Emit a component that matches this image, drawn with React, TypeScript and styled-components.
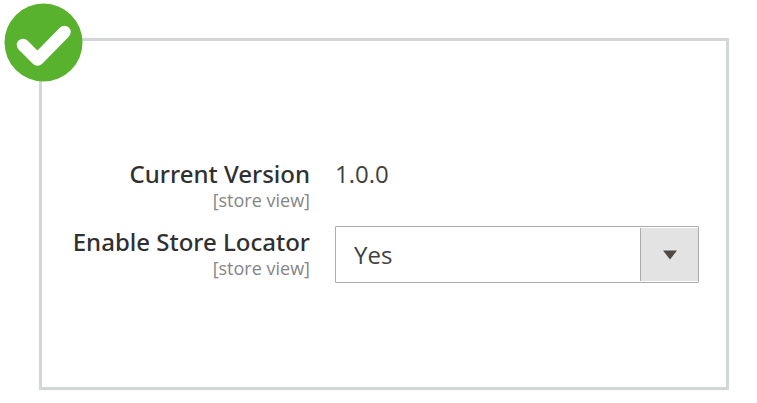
import React from "react";
import styled, { createGlobalStyle } from "styled-components";

const GlobalStyle = createGlobalStyle`
  *, *::before, *::after { box-sizing: border-box; }
  body {
    margin: 0;
    background: #fff;
    color: #41413f;
    font-family: "Open Sans", "Noto Sans", sans-serif;
  }
`;

const Page = styled.main`
  padding: 38px 28px 13px 39px;
`;

const Panel = styled.section`
  position: relative;
  padding: 117px 27px 104px 30px;
  border: 3px solid #d3d6d6;
  border-radius: 1px;
  box-shadow: 0 0 1px #d3d6d6;
`;

const StatusBadge = styled.svg`
  position: absolute;
  top: -38px;
  left: -38px;
  width: 79px;
  height: 79px;
`;

const Settings = styled.form`
  display: grid;
  grid-template-columns: 238px minmax(0, 1fr);
  column-gap: 25px;
  row-gap: 16px;
`;

const Caption = styled.div`
  display: flex;
  flex-direction: column;
  align-items: flex-end;
  white-space: nowrap;
`;

const Name = styled.label`
  color: #303030;
  font-family: "Noto Sans", sans-serif;
  font-size: 24px;
  font-weight: 500;
  line-height: 32px;
`;

const Scope = styled.span`
  color: #858585;
  font-size: 18px;
  line-height: 20px;
`;

const Value = styled.output`
  font-size: 24px;
  line-height: 32px;
`;

const SelectBox = styled.div`
  display: grid;
  grid-template-columns: minmax(0, 1fr) 58px;
  height: 57px;
  border: 1px solid #adadad;
  border-radius: 1px;
`;

const Select = styled.select`
  grid-area: 1 / 1 / 2 / 3;
  width: 100%;
  padding: 0 76px 0 18px;
  border: 0;
  appearance: none;
  background: #fff;
  color: inherit;
  font: inherit;
  font-size: 24px;
`;

const Arrow = styled.span`
  grid-area: 1 / 2;
  z-index: 1;
  display: grid;
  place-items: center;
  margin: 1px 0;
  border-left: 1px solid #adadad;
  background: #e3e3e3;
  pointer-events: none;
`;

export default function App() {
  return (
    <>
      <GlobalStyle />
      <Page>
        <Panel>
          <StatusBadge viewBox="0 0 79 79" role="img" aria-label="Enabled">
            <circle cx="39.5" cy="39.5" r="39" fill="#58b22e" />
            <path
              d="M19 42 L33.500 56.500 L60.500 29"
              fill="none"
              stroke="#fff"
              strokeWidth="12.5"
              strokeLinecap="round"
              strokeLinejoin="round"
            />
          </StatusBadge>
          <Settings>
            <Caption>
              <Name htmlFor="version">Current Version</Name>
              <Scope>[store view]</Scope>
            </Caption>
            <Value id="version">1.0.0</Value>
            <Caption>
              <Name htmlFor="enabled">Enable Store Locator</Name>
              <Scope>[store view]</Scope>
            </Caption>
            <SelectBox>
              <Select id="enabled" defaultValue="yes">
                <option value="yes">Yes</option>
                <option value="no">No</option>
              </Select>
              <Arrow aria-hidden="true">
                <svg width="14" height="10" viewBox="0 0 14 10">
                  <path d="M0 0.500h14L7 9.500z" fill="#514943" />
                </svg>
              </Arrow>
            </SelectBox>
          </Settings>
        </Panel>
      </Page>
    </>
  );
}
